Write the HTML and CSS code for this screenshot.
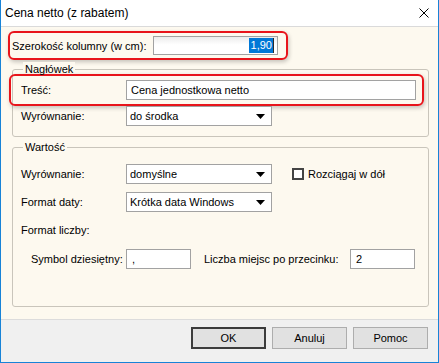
FILE: index.html
```html
<!DOCTYPE html>
<html lang="pl">
  <head>
    <meta charset="UTF-8" />
    <title>Cena netto (z rabatem)</title>
    <link rel="stylesheet" href="styles.css">
  </head>
  <body>
    <div class="window">
      <div class="titlebar">
        <span class="title">Cena netto (z rabatem)</span>
        <svg class="close" width="10" height="10" viewBox="0 0 10 10">
          <path d="M0.5 0.5 L9.5 9.5 M9.5 0.5 L0.5 9.5" stroke="#000" stroke-width="1" fill="none" />
        </svg>
      </div>

      <div class="content">
        <div class="row marked width-row">
          <span class="label wide">Szerokość kolumny (w cm):</span>
          <div class="field width-field"><span class="sel">1,90</span></div>
        </div>

        <div class="group">
          <div class="caption head-caption">Nagłówek</div>
          <div class="row marked text-row">
            <span class="label">Treść:</span>
            <div class="field text-field">Cena jednostkowa netto</div>
          </div>
          <div class="row">
            <span class="label">Wyrównanie:</span>
            <div class="select">
              <span>do środka</span>
              <svg class="arrow" width="9" height="5" viewBox="0 0 9 5"><path d="M0 0 H9 L4.5 5 Z" fill="#000" /></svg>
            </div>
          </div>
        </div>

        <div class="group value-group">
          <div class="caption">Wartość</div>
          <div class="row first">
            <span class="label">Wyrównanie:</span>
            <div class="select">
              <span>domyślne</span>
              <svg class="arrow" width="9" height="5" viewBox="0 0 9 5"><path d="M0 0 H9 L4.5 5 Z" fill="#000" /></svg>
            </div>
            <span class="checkbox"></span>
            <span class="check-label">Rozciągaj w dół</span>
          </div>
          <div class="row">
            <span class="label">Format daty:</span>
            <div class="select">
              <span>Krótka data Windows</span>
              <svg class="arrow" width="9" height="5" viewBox="0 0 9 5"><path d="M0 0 H9 L4.5 5 Z" fill="#000" /></svg>
            </div>
          </div>
          <div class="row">
            <span class="label">Format liczby:</span>
          </div>
          <div class="row number-row">
            <span class="label symbol-label">Symbol dziesiętny:</span>
            <div class="field small-field">,</div>
            <span class="label places-label">Liczba miejsc po przecinku:</span>
            <div class="field small-field">2</div>
          </div>
        </div>
      </div>

      <div class="footer">
        <button class="Button default">OK</button>
        <button class="Button">Anuluj</button>
        <button class="Button">Pomoc</button>
      </div>
    </div>
  </body>
</html>
```

FILE: styles.css
```css
* {
  box-sizing: border-box;
}
body {
  margin: 0;
  font-family: "Liberation Sans", Arial, sans-serif;
  font-size: 11px;
  color: #000;
  background: #fff;
}

.window {
  width: 439px;
  height: 363px;
  border: 1px solid #1883d7;
  border-top: none;
  display: flex;
  flex-direction: column;
  background: #f0f0f0;
}

.titlebar {
  flex: none;
  height: 27px;
  background: #fff;
  border-bottom: 1px solid #dadada;
  display: flex;
  align-items: center;
  justify-content: space-between;
  padding: 0 9px 0 4px;
}
.title {
  font-size: 12px;
}

.content {
  flex: none;
  height: 292px;
  background: #fdf9ef;
  padding: 4px 9px 12px 11px;
  display: flex;
  flex-direction: column;
}

.row {
  display: flex;
  align-items: center;
  height: 20px;
}
.label {
  flex: none;
  width: 105px;
}
.label.wide {
  width: 141px;
}

/* red marker round the rows */
.marked {
  border: 2px solid #e8141b;
  border-radius: 6px;
  box-shadow: 1px 2px 4px rgba(0, 0, 0, 0.22);
}
.width-row {
  width: 280px;
  height: 29px;
  margin-left: -4px;
  padding-left: 2px;
}
.text-row {
  width: 415px;
  height: 32px;
  margin-left: -12px;
  padding-left: 10px;
}

.field {
  flex: none;
  height: 20px;
  line-height: 18px;
  background: #fff;
  border: 1px solid #a2a2a2;
  padding: 0 4px;
}
.width-field {
  width: 125px;
  height: 19px;
  text-align: right;
  padding: 1px 3px 0 0;
  line-height: 15px;
  background: linear-gradient(#ececec, #fff 45%);
}
.sel {
  display: inline-block;
  background: #0078d7;
  color: #fff;
  padding: 0 1px 0 2px;
  border-right: 1px solid #2a2a2a;
}
.text-field {
  width: 290px;
}
.small-field {
  width: 65px;
  padding-left: 5px;
}

.select {
  flex: none;
  width: 146px;
  height: 20px;
  background: #fff;
  border: 1px solid #a2a2a2;
  display: flex;
  align-items: center;
  justify-content: space-between;
  padding: 0 6px 0 3px;
}

.group {
  flex: none;
  margin-top: 9px;
  border: 1px solid #c9c5bb;
  border-radius: 3px;
  padding: 0 8px 10px 8px;
}
.value-group {
  flex: 1;
  margin-top: 10px;
}
.caption {
  width: max-content;
  margin: -8px 0 0 2px;
  padding: 0 2px;
  line-height: 15px;
  background: #fdf9ef;
}
.head-caption {
  margin-bottom: -3px;
}

.value-group .row {
  margin-top: 8px;
}
.value-group .row.first {
  margin-top: 9px;
}
.value-group .number-row {
  margin-top: 9px;
}

.checkbox {
  flex: none;
  width: 12px;
  height: 12px;
  margin-left: 20px;
  border: 2px solid #444;
  background: #fff;
}
.check-label {
  margin-left: 4px;
}

.symbol-label {
  width: 95px;
  margin-left: 10px;
}
.places-label {
  width: 146px;
  margin-left: 13px;
}

.footer {
  flex: 1;
  border-top: 1px solid #dcdcdc;
  display: flex;
  justify-content: flex-end;
  align-items: flex-start;
  gap: 6px;
  padding: 7px 10px 0 0;
}
.Button {
  width: 75px;
  height: 22px;
  margin: 0;
  padding: 0;
  font-family: "Liberation Sans", Arial, sans-serif;
  font-size: 11px;
  color: #000;
  background: #e1e1e1;
  border: 1px solid #adadad;
}
.Button.default {
  border: 2px solid #3c3c3c;
}
```
